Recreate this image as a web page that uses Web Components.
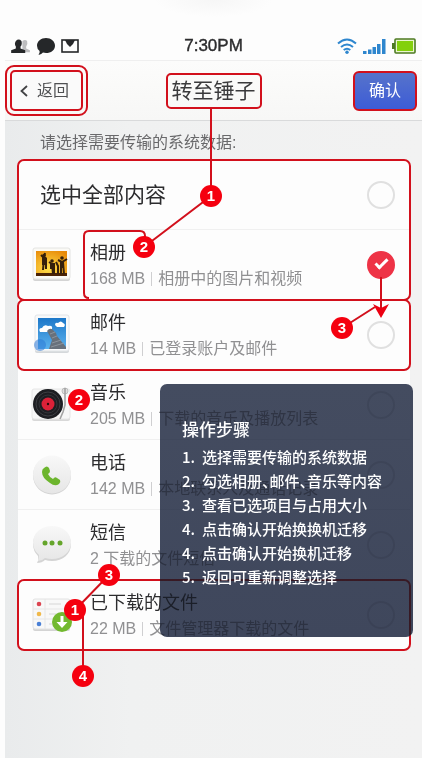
<!DOCTYPE html>
<html lang="zh-CN">
<head>
<meta charset="utf-8">
<meta name="viewport" content="width=device-width, initial-scale=1">
<title>转至锤子</title>
<style>
  body {
    margin: 0;
    background: #fdfdfd;
    color: #2c2c2e;
    font-family: "Liberation Sans", "Noto Sans CJK SC", sans-serif;
    --mark: #d2101c;
  }
</style>
</head>
<body>
<transfer-page>
  <status-bar slot="top"></status-bar>
  <nav-header slot="top">转至锤子</nav-header>

  <data-group marked>
    <data-row all heading="选中全部内容"></data-row>
    <data-row heading="相册" size="168 MB" checked>
      <app-icon slot="icon" name="photos"></app-icon>相册中的图片和视频
    </data-row>
  </data-group>
  <data-group marked>
    <data-row heading="邮件" size="14 MB">
      <app-icon slot="icon" name="mail"></app-icon>已登录账户及邮件
    </data-row>
  </data-group>
  <data-group>
    <data-row heading="音乐" size="205 MB">
      <app-icon slot="icon" name="music"></app-icon>下载的音乐及播放列表
    </data-row>
    <data-row heading="电话" size="142 MB">
      <app-icon slot="icon" name="phone"></app-icon>本地联系人及通话记录
    </data-row>
    <data-row heading="短信">
      <app-icon slot="icon" name="messages"></app-icon>2 下载的文件短信
    </data-row>
  </data-group>
  <data-group marked>
    <data-row heading="已下载的文件" size="22 MB">
      <app-icon slot="icon" name="files"></app-icon>文件管理器下载的文件
    </data-row>
  </data-group>

  <steps-panel slot="overlay">
    <span slot="title">操作步骤</span>
    <step-item no="1.">选择需要传输的系统数据</step-item>
    <step-item no="2.">勾选相册、邮件、音乐等内容</step-item>
    <step-item no="3.">查看已选项目与占用大小</step-item>
    <step-item no="4.">点击确认开始换换机迁移</step-item>
    <step-item no="4.">点击确认开始换机迁移</step-item>
    <step-item no="5.">返回可重新调整选择</step-item>
  </steps-panel>

  <callout-lines slot="overlay"></callout-lines>
  <callout-badge slot="overlay" x="211" y="196">1</callout-badge>
  <callout-badge slot="overlay" x="144" y="247">2</callout-badge>
  <callout-badge slot="overlay" x="342" y="328">3</callout-badge>
  <callout-badge slot="overlay" x="79" y="400">2</callout-badge>
  <callout-badge slot="overlay" x="109" y="575">3</callout-badge>
  <callout-badge slot="overlay" x="75" y="610">1</callout-badge>
  <callout-badge slot="overlay" x="83" y="676">4</callout-badge>
</transfer-page>

<script>
// Page shell: top bars, hint, list and everything that floats over it
class TransferPage extends HTMLElement {
  constructor() {
    super();
    this.attachShadow({ mode: 'open' });
  }

  connectedCallback() {
    this.shadowRoot.innerHTML = `
      <style>
        :host {
          display: flex;
          flex-direction: column;
          position: relative;
          min-height: 100vh;
          padding-left: 5px;
          box-sizing: border-box;
        }

        main {
          flex: 1;
          padding: 10px 12px 24px 13px;
          background: linear-gradient(90deg, #e9ebec, #f0f1f1 30%, #f2f2f2);
        }

        p {
          margin: 0;
          padding: 0 22px 5px;
          font-size: 16px;
          line-height: 24px;
          color: #69696b;
        }

        .list {
          background: #fdfdfd;
          border-radius: 6px;
        }
      </style>
      <slot name="top"></slot>
      <main>
        <p>请选择需要传输的系统数据:</p>
        <div class="list"><slot></slot></div>
      </main>
      <slot name="overlay"></slot>
    `;
  }
}

customElements.define('transfer-page', TransferPage);

// Status bar
class StatusBar extends HTMLElement {
  constructor() {
    super();
    this.attachShadow({ mode: 'open' });
  }

  connectedCallback() {
    this.shadowRoot.innerHTML = `
      <style>
        :host {
          display: grid;
          grid-template-columns: 1fr auto 1fr;
          align-items: center;
          height: 28px;
          padding-top: 32px;
          border-bottom: 1px solid #efefef;
          background: radial-gradient(ellipse at 50% 0, #f6f6f6, #fdfdfd 20%);
        }

        .side {
          display: flex;
          align-items: center;
          gap: 6px;
          padding: 0 6px;
        }

        .right {
          justify-content: flex-end;
        }

        time {
          font-size: 17px;
          line-height: 20px;
          -webkit-text-stroke: 0.4px currentColor;
        }

        svg {
          display: block;
        }
      </style>
      <div class="side">
        <svg width="20" height="15" viewBox="0 0 21 16">
          <path fill="#bdbdbf" d="M12 2q3-2 5 0q1 3-1 6v2l4 2v2h-8z"/>
          <path fill="#252729" d="M5 2q3-3 6 0q1 4-1 6v2l5 2v3H0v-3l5-2V8Q3 5 5 2z"/>
        </svg>
        <svg width="18" height="17" viewBox="0 0 18 17">
          <path fill="#252729" d="M9 0C14 0 18 3.300 18 7.700S14 15 9 15q-1.500 0-3-.4Q4 17 1.500 16.600 3 15 2.600 13 0 11 0 7.700C0 3.300 4 0 9 0z"/>
        </svg>
        <svg width="18" height="14" viewBox="0 0 18 14">
          <rect x="1" y="1" width="16" height="12" fill="none" stroke="#252729" stroke-width="1.600"/>
          <path fill="#252729" d="M4 1h10l-2 4-3 3-3-3z"/>
        </svg>
      </div>
      <time>7:30PM</time>
      <div class="side right">
        <svg width="20" height="16" viewBox="0 0 20 16" fill="none" stroke="#2e86ce" stroke-width="2">
          <path d="M1 5.500Q10-2.500 19 5.500M4 9q6-5 12 0M6.700 12q3.300-2.600 6.600 0"/>
          <circle cx="10" cy="14.200" r="1.700" fill="#2e86ce" stroke="none"/>
        </svg>
        <svg width="23" height="15" viewBox="0 0 23 15" fill="#2e86ce">
          <path d="M0 12h3.500v3H0zM5 10.500h3.500V15H5zM9.500 8H13v7H9.500zM14 5h3.500v10H14zM19 0h3.500v15H19z"/>
        </svg>
        <svg width="24" height="16" viewBox="0 0 24 16">
          <path fill="#4d7a22" d="M0 5h3v6H0z"/>
          <rect x="3" y="1" width="20" height="14" rx="1" fill="#e9f6cf" stroke="#4d7a22" stroke-width="1.600"/>
          <rect x="5" y="3" width="16" height="10" fill="#83d00c"/>
        </svg>
      </div>
    `;
  }
}

customElements.define('status-bar', StatusBar);

// Header with the back and confirm buttons
class NavHeader extends HTMLElement {
  constructor() {
    super();
    this.attachShadow({ mode: 'open' });
  }

  connectedCallback() {
    this.shadowRoot.innerHTML = `
      <style>
        :host {
          display: grid;
          grid-template-columns: 1fr auto 1fr;
          align-items: center;
          height: 59px;
          border-bottom: 1px solid #d9dadb;
          background: linear-gradient(#fcfcfb, #f7f7f6);
        }

        button {
          font: inherit;
          font-size: 16px;
          line-height: 24px;
          cursor: pointer;
        }

        .back-frame {
          justify-self: start;
          padding: 3px;
          border: 2px solid var(--mark);
          border-radius: 9px;
        }

        .back {
          display: flex;
          align-items: center;
          gap: 9px;
          height: 41px;
          padding: 0 12px 0 8px;
          border: 2px solid var(--mark);
          border-radius: 5px;
          background: #fafafa;
          color: #505153;
        }

        h1 {
          margin: 0;
          padding: 0 4px;
          border: 2px solid var(--mark);
          border-radius: 5px;
          font-size: 21px;
          font-weight: 400;
          line-height: 32px;
          color: #3a3a3c;
        }

        .confirm {
          justify-self: end;
          height: 40px;
          margin-right: 5px;
          padding: 0 14px;
          border: 2px solid var(--mark);
          border-radius: 6px;
          background: linear-gradient(#5673cb, #3d5cd6);
          color: #fff;
        }
      </style>
      <div class="back-frame">
        <button class="back" type="button">
          <svg width="8" height="12" viewBox="0 0 8 12" fill="none" stroke="#414244" stroke-width="1.800">
            <path d="M7 1 1.500 6 7 11"/>
          </svg>
          返回
        </button>
      </div>
      <h1><slot></slot></h1>
      <button class="confirm" type="button">确认</button>
    `;
  }
}

customElements.define('nav-header', NavHeader);

// Group of rows, outlined when it has the "marked" attribute
class DataGroup extends HTMLElement {
  constructor() {
    super();
    this.attachShadow({ mode: 'open' });
  }

  connectedCallback() {
    this.shadowRoot.innerHTML = `
      <style>
        :host {
          display: block;
        }

        :host([marked]) {
          border-radius: 6px;
          outline: 2px solid var(--mark);
          outline-offset: -1px;
        }
      </style>
      <slot></slot>
    `;
  }
}

customElements.define('data-group', DataGroup);

// One selectable kind of data
class DataRow extends HTMLElement {
  constructor() {
    super();
    this.attachShadow({ mode: 'open' });
  }

  connectedCallback() {
    const all = this.hasAttribute('all');
    const size = this.getAttribute('size');
    this.shadowRoot.innerHTML = `
      <style>
        :host {
          display: block;
          height: 69px;
          border-bottom: 1px solid #f0f0f0;
        }

        :host(:last-child) {
          border-bottom-color: transparent;
        }

        label {
          display: flex;
          align-items: center;
          gap: 16px;
          height: 100%;
          padding: 0 15px 0 14px;
        }

        .all {
          padding-left: 22px;
        }

        .text {
          flex: 1;
          min-width: 0;
          padding-top: 2px;
        }

        .all .text {
          padding-top: 0;
        }

        .heading {
          font-size: 18px;
          line-height: 26px;
        }

        .all .heading {
          font-size: 21px;
        }

        .detail {
          display: flex;
          align-items: center;
          gap: 6px;
          font-size: 16px;
          line-height: 26px;
          color: #909092;
          white-space: nowrap;
        }

        .bar {
          width: 1px;
          height: 14px;
          background: #cfcfd1;
        }

        input {
          appearance: none;
          display: grid;
          place-items: center;
          width: 28px;
          height: 28px;
          margin: 0;
          border: 2px solid #e0e0e0;
          border-radius: 50%;
        }

        input:checked {
          border-color: #ee3346;
          background: #ee3346;
        }

        input:checked::before {
          content: "";
          width: 10px;
          height: 4px;
          margin-bottom: 4px;
          border: solid #fff;
          border-width: 0 0 3px 3px;
          transform: rotate(-45deg);
        }
      </style>
      <label class="${all ? 'all' : ''}">
        <slot name="icon"></slot>
        <div class="text">
          <div class="heading">${this.getAttribute('heading')}</div>
          ${all ? '' : `<div class="detail">
            ${size ? `<span>${size}</span><i class="bar"></i>` : ''}
            <span><slot></slot></span>
          </div>`}
        </div>
        <input type="checkbox" ${this.hasAttribute('checked') ? 'checked' : ''}>
      </label>
    `;
  }
}

customElements.define('data-row', DataRow);

const appIcons = {
  photos: `
    <rect x="1" y="4" width="37" height="32" rx="2" fill="#d4d4d4"/>
    <rect x="1" y="3" width="37" height="31" rx="2" fill="#fbfaf6" stroke="#e4e4e2"/>
    <rect x="4" y="6" width="31" height="25" fill="url(#sun)"/>
    <path fill="#4b2305" d="M4 28h31v3H4z"/>
    <path stroke="#35200c" stroke-width="2" fill="none" d="M9 10l3 3 1-5M12 13l-1 12M14 13v11M17 17l3 2 1 10M22 19v10M24 17l2 4v8M26 15l4 2 5-3M29 17v12M31 17l1 12"/>
    <path fill="#35200c" d="M10 12h4.500v8H10zM18 18h5v6h-5zM28 16h4v7h-4z"/>
    <circle cx="12" cy="10.500" r="1.800" fill="#35200c"/>
    <circle cx="20" cy="16" r="1.800" fill="#35200c"/>
    <circle cx="30" cy="13" r="1.800" fill="#35200c"/>`,
  mail: `
    <rect x="3" y="1" width="34" height="37" rx="2" fill="#d5d8db"/>
    <rect x="3" y="0" width="34" height="36" rx="2" fill="#f8f9fa" stroke="#e2e5e8"/>
    <rect x="6" y="3" width="28" height="31" fill="url(#sky)"/>
    <path fill="#fff" d="M8 17q-2-4 2-4 2-4 6-2 5-1 4 3-1 3-5 3zM23 10q0-3 3-2 3-3 5 0 3 1 1 4h-7z"/>
    <path fill="#68717c" d="M15 16q3-4 6-1 3 2 4 6l9 11v2H17l3-9z"/>
    <path stroke="#8c949d" d="M18 19l5-2M20 23l5-2M20 28l9-3M19 32l13-4" fill="none"/>
    <circle cx="8" cy="30" r="6" fill="#2c78d6" opacity=".55"/>`,
  music: `
    <rect x="0" y="5" width="38" height="31" rx="2" fill="#d8d8d8"/>
    <rect x="0" y="4" width="38" height="30" rx="2" fill="#f7f7f7" stroke="#e6e6e6"/>
    <circle cx="16" cy="19" r="15" fill="#1d1e22"/>
    <circle cx="16" cy="19" r="12" fill="none" stroke="#3d3e43"/>
    <circle cx="16" cy="19" r="9" fill="none" stroke="#333439"/>
    <circle cx="16" cy="19" r="6.500" fill="#db2138"/>
    <circle cx="16" cy="19" r="1.200" fill="#2a0a0e"/>
    <circle cx="33" cy="6" r="3" fill="#dedede" stroke="#bdbdbd"/>
    <path d="M33 3v17l-2 7-3 7" fill="none" stroke="#a3a3a3" stroke-width="1.600"/>`,
  phone: `
    <circle cx="20" cy="20.500" r="19" fill="#d4d4d4"/>
    <circle cx="20" cy="19.500" r="19" fill="url(#pearl)"/>
    <path fill="#6cb52d" d="M12 13q3-3 5 0l1 3q0 2-2 3 2 4 5 5 2-3 4-1l3 2q1 2-1 4-4 3-9-1-8-5-8-11 0-3 2-4z"/>`,
  messages: `
    <path fill="#d4d4d4" d="M20 2c11 0 19 7 19 17s-8 17-19 17q-4 0-7-1-3 3-8 3 2-3 1-7-5-5-5-12C1 9 9 2 20 2z"/>
    <path fill="url(#pearl)" d="M20 1c11 0 19 7 19 16.500S31 34 20 34q-4 0-7-1-3 3-7 3 1-3 1-6-6-5-6-12.500C1 8 9 1 20 1z"/>
    <circle cx="13" cy="18" r="2.500" fill="#65a52b"/>
    <circle cx="20" cy="18" r="2.500" fill="#65a52b"/>
    <circle cx="28" cy="18" r="2.500" fill="#65a52b"/>`,
  files: `
    <rect x="1" y="5" width="37" height="31" rx="2" fill="#d4d4d4"/>
    <rect x="1" y="4" width="37" height="30" rx="2" fill="#f8f8f8" stroke="#e2e2e2"/>
    <path stroke="#e6e6e6" d="M13 4v30M1 14h37M1 24h37"/>
    <path stroke="#d6d6d6" d="M17 9h12M17 19h10M17 29h6"/>
    <circle cx="7" cy="9" r="2.300" fill="#dc4551"/>
    <circle cx="7" cy="19" r="2.300" fill="#f0b94b"/>
    <circle cx="7" cy="29" r="2.300" fill="#4a80d6"/>
    <circle cx="30" cy="27" r="10" fill="#72b92f"/>
    <path fill="#fff" d="M28.500 21h3v6h4L30 33l-5.500-6h4z"/>`
};

// Icon at the start of a row
class AppIcon extends HTMLElement {
  constructor() {
    super();
    this.attachShadow({ mode: 'open' });
  }

  connectedCallback() {
    this.shadowRoot.innerHTML = `
      <style>
        :host {
          display: block;
          flex: none;
          width: 42px;
          height: 40px;
        }

        svg {
          display: block;
          overflow: visible;
        }
      </style>
      <svg width="40" height="40" viewBox="0 0 40 40">
        <defs>
          <radialGradient id="sun" cx=".4" cy=".7" r=".8">
            <stop offset="0" stop-color="#ffe04a"/>
            <stop offset="1" stop-color="#e88a08"/>
          </radialGradient>
          <linearGradient id="sky" x2="0" y2="1">
            <stop offset="0" stop-color="#1d78c9"/>
            <stop offset="1" stop-color="#5cb2ee"/>
          </linearGradient>
          <linearGradient id="pearl" x2="0" y2="1">
            <stop offset="0" stop-color="#f8f8f8"/>
            <stop offset="1" stop-color="#e6e6e6"/>
          </linearGradient>
        </defs>
        ${appIcons[this.getAttribute('name')]}
      </svg>
    `;
  }
}

customElements.define('app-icon', AppIcon);

// Dark panel with the steps, the list shows through it
class StepsPanel extends HTMLElement {
  constructor() {
    super();
    this.attachShadow({ mode: 'open' });
  }

  connectedCallback() {
    this.shadowRoot.innerHTML = `
      <style>
        :host {
          position: absolute;
          top: 384px;
          right: 9px;
          width: 253px;
          height: 253px;
          border-radius: 7px;
          background: rgba(255, 255, 255, 0.3);
          color: #fff;
        }

        .tint {
          position: absolute;
          inset: 0;
          border-radius: inherit;
          background: linear-gradient(#444c61, #3f475d);
          mix-blend-mode: multiply;
        }

        .content {
          position: relative;
          padding: 35px 12px 0 22px;
        }

        h2 {
          margin: 0 0 2px;
          font-size: 17px;
          font-weight: 500;
          line-height: 24px;
        }
      </style>
      <div class="tint"></div>
      <div class="content">
        <h2><slot name="title"></slot></h2>
        <slot></slot>
      </div>
    `;
  }
}

customElements.define('steps-panel', StepsPanel);

class StepItem extends HTMLElement {
  constructor() {
    super();
    this.attachShadow({ mode: 'open' });
  }

  connectedCallback() {
    this.shadowRoot.innerHTML = `
      <style>
        :host {
          display: grid;
          grid-template-columns: 20px auto;
          font-family: "Noto Sans CJK SC", sans-serif;
          font-size: 15px;
          font-weight: 500;
          line-height: 24px;
          font-feature-settings: "halt";
          white-space: nowrap;
        }
      </style>
      <span>${this.getAttribute('no')}</span>
      <span><slot></slot></span>
    `;
  }
}

customElements.define('step-item', StepItem);

// Lines between the numbered badges
class CalloutLines extends HTMLElement {
  constructor() {
    super();
    this.attachShadow({ mode: 'open' });
  }

  connectedCallback() {
    this.shadowRoot.innerHTML = `
      <style>
        :host {
          position: absolute;
          top: 0;
          left: 0;
          pointer-events: none;
        }

        svg {
          display: block;
        }
      </style>
      <svg width="422" height="700" viewBox="0 0 422 700" fill="none" stroke="#d2101c" stroke-width="2">
        <path d="M211 109v87L144 247"/>
        <path d="M89 298q-5 0-5-5v-57q0-5 5-5h51q5 0 5 5v10"/>
        <path d="M381 277v34M342 328l33-21"/>
        <path d="M381 318l-8-14 8 4 8-4z" fill="#ec0012" stroke="none"/>
        <path d="M109 575l-34 35M83 610v66"/>
      </svg>
    `;
  }
}

customElements.define('callout-lines', CalloutLines);

// Numbered badge, centred on its x and y
class CalloutBadge extends HTMLElement {
  constructor() {
    super();
    this.attachShadow({ mode: 'open' });
  }

  connectedCallback() {
    this.style.left = this.getAttribute('x') + 'px';
    this.style.top = this.getAttribute('y') + 'px';
    this.shadowRoot.innerHTML = `
      <style>
        :host {
          position: absolute;
          width: 22px;
          height: 22px;
          margin: -11px 0 0 -11px;
          border-radius: 50%;
          background: #f5000f;
          color: #fff;
          font-size: 15px;
          font-weight: 700;
          line-height: 22px;
          text-align: center;
        }
      </style>
      <slot></slot>
    `;
  }
}

customElements.define('callout-badge', CalloutBadge);
</script>
</body>
</html>
